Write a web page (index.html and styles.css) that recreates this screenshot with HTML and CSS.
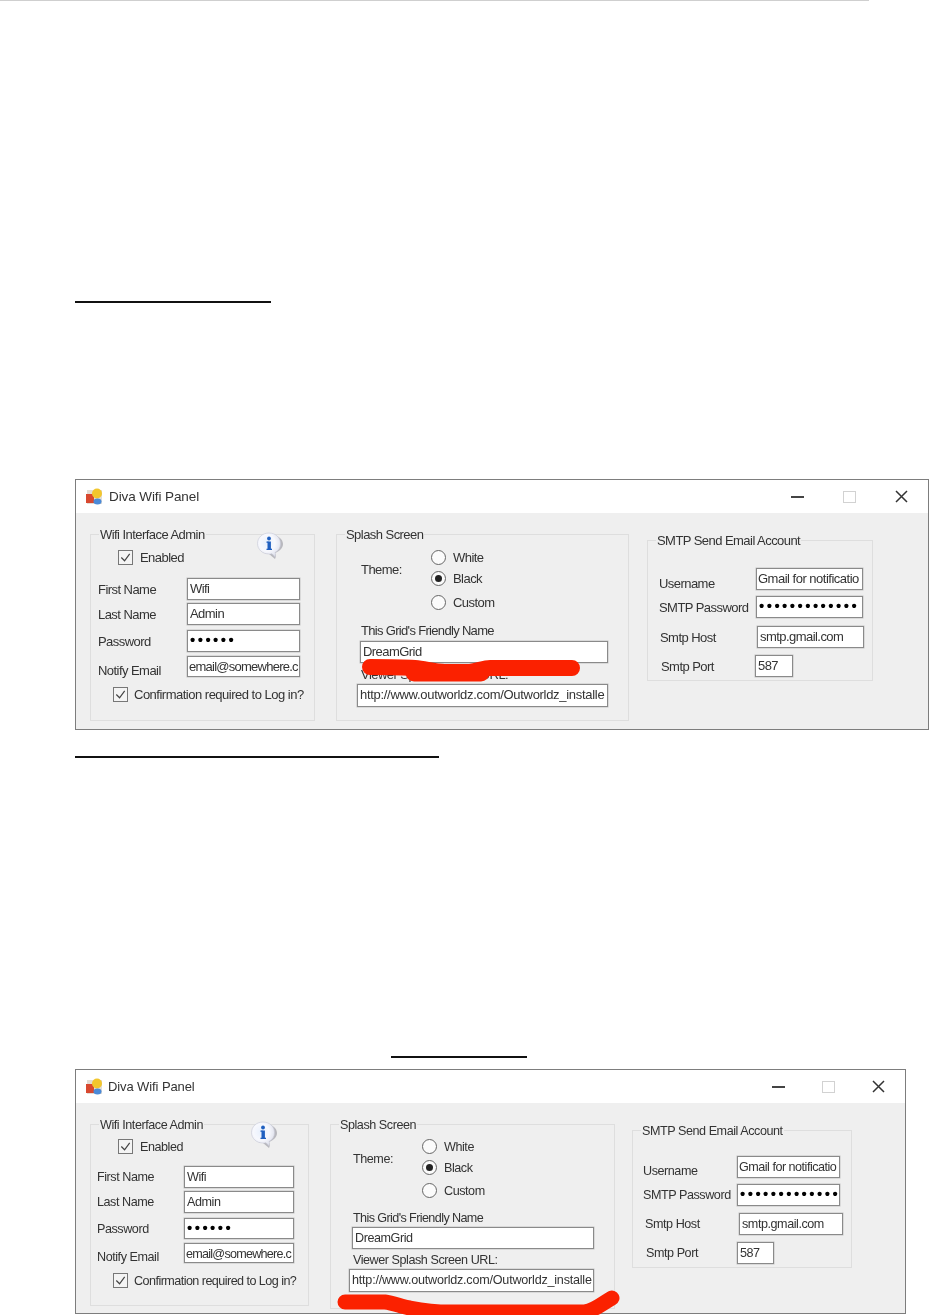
FILE: index.html
```html
<!DOCTYPE html>
<html lang="en">
<head>
<meta charset="utf-8">
<title>Diva Wifi Panel</title>
<link rel="stylesheet" href="styles.css">
</head>
<body>
<svg class="defs" width="0" height="0" aria-hidden="true">
  <defs>
    <radialGradient id="bubble" cx=".42" cy=".42" r=".62"><stop offset="0" stop-color="#e8f0fd"/><stop offset=".55" stop-color="#f7f8fd"/><stop offset="1" stop-color="#dfe1ec"/></radialGradient>
    <symbol id="app" viewBox="0 0 17 17">
      <rect x="1" y="2" width="15" height="14" fill="#e2ddd6"/>
      <rect x="0" y="6" width="8" height="9" fill="#d8482f"/>
      <circle cx="11" cy="5.500" r="5" fill="#f2c62e"/>
      <ellipse cx="11.500" cy="13.500" rx="4" ry="3" fill="#4a8ad8"/>
    </symbol>
    <symbol id="balloon" viewBox="0 0 28 28">
      <path d="M15 3C8 3 3 7 3 13c0 5 4 9 10 9l6 5c1-2 1-4 0-6 5-2 8-5 8-9C27 7 22 3 15 3Z" fill="#a5a5ad" opacity=".75"/>
      <path d="M13 1C6.500 1 1.500 5.500 1.500 11.500S6.500 22 13 22c1 0 2 0 3-.300l3 3c.5-1.500.5-3 0-4.200 3.500-1.500 5.500-5 5.500-9C24.500 5.500 19.500 1 13 1Z" fill="url(#bubble)" stroke="#c8cad6" stroke-width=".6"/>
      <rect x="11.500" y="9.500" width="3.400" height="8" fill="#1f5fc0"/>
      <rect x="10.500" y="9.500" width="2" height="1.300" fill="#1f5fc0"/>
      <rect x="10.500" y="16.700" width="5.500" height="1.300" fill="#1f5fc0"/>
      <circle cx="13" cy="6.500" r="1.900" fill="#1f5fc0"/>
    </symbol>
    <symbol id="tick" viewBox="0 0 14 14">
      <path d="M2.500 7 6 10.500 11.500 3" stroke="#444" stroke-width="1.300" fill="none"/>
    </symbol>
    <symbol id="close" viewBox="0 0 13 13">
      <path d="M1 1 12 12M12 1 1 12" stroke="#333" stroke-width="1.500" fill="none"/>
    </symbol>
  </defs>
</svg>
<main class="page">
  <div class="top-rule"></div>
  <div class="rule rule-1"></div>

  <section class="win win-a">
    <header class="titlebar">
      <svg class="app-icon"><use href="#app"/></svg>
      <span class="title">Diva Wifi Panel</span>
      <div class="controls">
        <span class="ctl ctl-min"></span>
        <span class="ctl ctl-max"></span>
        <svg class="ctl-close"><use href="#close"/></svg>
      </div>
    </header>
    <div class="body">
      <div class="group admin">
        <span class="legend">Wifi Interface Admin</span>
        <svg class="info"><use href="#balloon"/></svg>
        <label class="check r-enabled"><span class="box"><svg><use href="#tick"/></svg></span>Enabled</label>
        <div class="row r-first"><span class="lbl">First Name</span><span class="field">Wifi</span></div>
        <div class="row r-last"><span class="lbl">Last Name</span><span class="field">Admin</span></div>
        <div class="row r-pass"><span class="lbl">Password</span><span class="field dots">••••••</span></div>
        <div class="row r-notify"><span class="lbl low">Notify Email</span><span class="field tight">email@somewhere.c</span></div>
        <label class="check r-confirm"><span class="box"><svg><use href="#tick"/></svg></span>Confirmation required to Log in?</label>
      </div>

      <div class="group splash">
        <span class="legend">Splash Screen</span>
        <div class="theme">
          <span class="theme-lbl">Theme:</span>
          <div class="radios">
            <label class="radio r-white"><span class="dot"></span>White</label>
            <label class="radio r-black"><span class="dot on"></span>Black</label>
            <label class="radio r-custom"><span class="dot"></span>Custom</label>
          </div>
        </div>
        <span class="cap r-friendly">This Grid's Friendly Name</span>
        <span class="field f-friendly">DreamGrid</span>
        <span class="cap r-viewer">Viewer Splash Screen URL:</span>
        <span class="field f-url">http://www.outworldz.com/Outworldz_installe</span>
      </div>

      <div class="group smtp">
        <span class="legend">SMTP Send Email Account</span>
        <div class="row s-user"><span class="lbl low">Username</span><span class="field gmail">Gmail for notificatio</span></div>
        <div class="row s-pass"><span class="lbl">SMTP Password</span><span class="field dots">•••••••••••••</span></div>
        <div class="row s-host"><span class="lbl">Smtp Host</span><span class="field">smtp.gmail.com</span></div>
        <div class="row s-port"><span class="lbl">Smtp Port</span><span class="field">587</span></div>
      </div>
    </div>
    <svg class="scribble" viewBox="0 0 852 249"><path d="M294 187C310 187 325 187 339 188C350 189 358 192 369 192C380 192 388 192 394 192C402 191 408 188 414 188L496 188" fill="none" stroke="#fb2100" stroke-width="16" stroke-linecap="round" stroke-linejoin="round"/><path d="M338 193L405 193" fill="none" stroke="#fb2100" stroke-width="17" stroke-linecap="round"/></svg>
  </section>

  <div class="rule rule-2"></div>
  <div class="rule rule-3"></div>

  <section class="win win-b">
    <header class="titlebar">
      <svg class="app-icon"><use href="#app"/></svg>
      <span class="title">Diva Wifi Panel</span>
      <div class="controls">
        <span class="ctl ctl-min"></span>
        <span class="ctl ctl-max"></span>
        <svg class="ctl-close"><use href="#close"/></svg>
      </div>
    </header>
    <div class="body">
      <div class="group admin">
        <span class="legend">Wifi Interface Admin</span>
        <svg class="info"><use href="#balloon"/></svg>
        <label class="check r-enabled"><span class="box"><svg><use href="#tick"/></svg></span>Enabled</label>
        <div class="row r-first"><span class="lbl">First Name</span><span class="field">Wifi</span></div>
        <div class="row r-last"><span class="lbl">Last Name</span><span class="field">Admin</span></div>
        <div class="row r-pass"><span class="lbl">Password</span><span class="field dots">••••••</span></div>
        <div class="row r-notify"><span class="lbl low">Notify Email</span><span class="field tight">email@somewhere.c</span></div>
        <label class="check r-confirm"><span class="box"><svg><use href="#tick"/></svg></span>Confirmation required to Log in?</label>
      </div>

      <div class="group splash">
        <span class="legend">Splash Screen</span>
        <div class="theme">
          <span class="theme-lbl">Theme:</span>
          <div class="radios">
            <label class="radio r-white"><span class="dot"></span>White</label>
            <label class="radio r-black"><span class="dot on"></span>Black</label>
            <label class="radio r-custom"><span class="dot"></span>Custom</label>
          </div>
        </div>
        <span class="cap r-friendly">This Grid's Friendly Name</span>
        <span class="field f-friendly">DreamGrid</span>
        <span class="cap r-viewer">Viewer Splash Screen URL:</span>
        <span class="field f-url">http://www.outworldz.com/Outworldz_installe</span>
      </div>

      <div class="group smtp">
        <span class="legend">SMTP Send Email Account</span>
        <div class="row s-user"><span class="lbl low">Username</span><span class="field gmail">Gmail for notificatio</span></div>
        <div class="row s-pass"><span class="lbl">SMTP Password</span><span class="field dots">•••••••••••••</span></div>
        <div class="row s-host"><span class="lbl">Smtp Host</span><span class="field">smtp.gmail.com</span></div>
        <div class="row s-port"><span class="lbl">Smtp Port</span><span class="field">587</span></div>
      </div>
    </div>
    <svg class="scribble" viewBox="0 0 829 243"><path d="M269 232L309 232C318 233 326 237 334 238C350 241 362 242 374 242L509 242C520 240 528 232 536 228" fill="none" stroke="#fb2100" stroke-width="15" stroke-linecap="round" stroke-linejoin="round"/></svg>
  </section>
</main>
</body>
</html>
```

FILE: styles.css
```css
html, body { margin: 0; padding: 0; background: #fff; }
body { width: 929px; height: 1315px; overflow: hidden; }
.defs { display: block; height: 0; }
.page { display: flex; flex-direction: column; font-family: "Liberation Sans", Arial, sans-serif; color: #333; }

.top-rule { width: 869px; height: 1px; background: #cfcfcf; }
.rule { background: #111; height: 2px; }
.rule-1 { width: 196px; margin: 300px 0 0 75px; }
.rule-2 { width: 364px; margin: 26px 0 0 75px; }
.rule-3 { width: 136px; margin: 298px 0 0 391px; }

.win { position: relative; box-sizing: border-box; margin-left: 75px; background: #efefef; border: 1px solid #7d7d7d; filter: blur(0.45px); }
.win-a { width: 854px; height: 251px; margin-top: 176px; }
.win-b { width: 831px; height: 245px; margin-top: 11px; }

.titlebar { display: flex; align-items: center; height: 33px; background: #fff; padding-left: 10px; }
.app-icon { width: 17px; height: 17px; flex: none; }
.title { margin-left: 6px; font-size: 13.5px; letter-spacing: -0.1px; color: #333; }
.win-b .title { margin-left: 5px; font-size: 13px; }
.controls { margin-left: auto; display: flex; align-items: center; padding-right: 20px; }
.win-a .controls { gap: 39px; }
.win-b .controls { gap: 37px; }
.ctl { display: block; box-sizing: border-box; }
.ctl-min { width: 13px; height: 2px; background: #444; }
.ctl-max { width: 13px; height: 12px; border: 1px solid #d2d2d2; }
.ctl-close { width: 13px; height: 13px; }

.body { display: flex; align-items: flex-start; }
.win-a .body { padding: 21px 0 0 14px; }
.win-b .body { padding: 21px 0 0 14px; }

.group { position: relative; box-sizing: border-box; display: flex; flex-direction: column; align-items: flex-start; border: 1px solid #dedede; font-size: 13px; letter-spacing: -0.55px; }
.win-b .group { font-size: 12.6px; letter-spacing: -0.45px; }
.legend { position: absolute; top: -8px; left: 8px; padding: 0 1px; height: 16px; line-height: 16px; background: #efefef; white-space: nowrap; }

.win-a .admin { width: 225px; height: 187px; }
.win-a .splash { width: 293px; height: 187px; margin-left: 21px; }
.win-a .smtp { width: 226px; height: 141px; margin: 6px 0 0 18px; }
.win-b .admin { width: 219px; height: 182px; }
.win-b .splash { width: 285px; height: 185px; margin-left: 21px; }
.win-b .smtp { width: 220px; height: 138px; margin: 6px 0 0 17px; }

.info { position: absolute; width: 28px; height: 28px; }
.win-a .info { top: -3px; left: 165px; }
.win-b .info { top: -4px; left: 159px; }

.check { display: flex; align-items: center; gap: 7px; height: 15px; white-space: nowrap; }
.box { box-sizing: border-box; width: 15px; height: 15px; border: 1px solid #777; background: #f4f4f4; flex: none; display: block; }
.box svg { display: block; width: 13px; height: 13px; }
.r-confirm { gap: 6px; }
.win-a .r-confirm { letter-spacing: -0.5px; }
.win-b .r-confirm { letter-spacing: -0.55px; }

.row { display: flex; align-items: center; white-space: nowrap; }
.lbl { flex: none; display: block; box-sizing: border-box; }
.low { padding-top: 8px; }
.field { box-sizing: border-box; display: block; height: 100%; border: 1px solid #8a8a8a; box-shadow: 0 0 0 .5px #c4c4c4; background: #fff; padding: 0 2px; overflow: hidden; white-space: nowrap; line-height: 20px; color: #333; }
.tight { letter-spacing: -0.75px; padding: 0 1px; }
.gmail { letter-spacing: -0.5px; padding: 0 1px; }
.win-a .f-url { letter-spacing: -0.3px; }
.win-b .f-url { letter-spacing: -0.22px; }
.dots { color: #000; font-size: 15px; font-weight: 700; letter-spacing: 2.45px; line-height: 18px; padding: 0 1px 0 2px; }

/* Window A: admin */
.win-a .r-enabled { margin: 15px 0 0 27px; }
.win-a .admin .row { padding-left: 7px; }
.win-a .admin .lbl { width: 89px; }
.win-a .admin .field { width: 113px; }
.win-a .r-first { height: 22px; margin-top: 13px; }
.win-a .r-last { height: 22px; margin-top: 3px; }
.win-a .r-pass { height: 22px; margin-top: 5px; }
.win-a .r-notify { height: 21px; margin-top: 4px; }
.win-a .r-confirm { margin: 10px 0 0 22px; }

/* Window B: admin */
.win-b .r-enabled { margin: 14px 0 0 27px; }
.win-b .admin .row { padding-left: 6px; }
.win-b .admin .lbl { width: 87px; }
.win-b .admin .field { width: 110px; }
.win-b .r-first { height: 22px; margin-top: 12px; }
.win-b .r-last { height: 22px; margin-top: 3px; }
.win-b .r-pass { height: 21px; margin-top: 5px; }
.win-b .r-notify { height: 20px; margin-top: 4px; }
.win-b .r-confirm { margin: 10px 0 0 22px; }

/* Splash */
.theme { display: flex; }
.radios { display: flex; flex-direction: column; align-items: flex-start; }
.radio { display: flex; align-items: center; gap: 7px; height: 15px; }
.dot { position: relative; box-sizing: border-box; width: 15px; height: 15px; border: 1px solid #666; border-radius: 50%; background: #fbfbfb; display: block; flex: none; }
.dot.on::after { content: ""; position: absolute; left: 3px; top: 3px; width: 7px; height: 7px; border-radius: 50%; background: #222; }
.cap { display: block; height: 16px; line-height: 16px; white-space: nowrap; }
.f-friendly, .f-url { height: 22px; }

.win-a .theme { margin: 15px 0 0 24px; }
.win-a .theme-lbl { width: 70px; margin-top: 12px; }
.win-a .r-black { margin-top: 6px; }
.win-a .r-custom { margin-top: 9px; }
.win-a .r-friendly { margin: 13px 0 0 24px; letter-spacing: -0.68px; }
.win-a .f-friendly { width: 248px; margin: 2px 0 0 23px; }
.win-a .r-viewer { margin: 4px 0 0 24px; }
.win-a .f-url { width: 251px; height: 23px; margin: 1px 0 0 20px; }

.win-b .theme { margin: 14px 0 0 22px; }
.win-b .theme-lbl { width: 69px; margin-top: 13px; }
.win-b .r-black { margin-top: 6px; }
.win-b .r-custom { margin-top: 8px; }
.win-b .r-friendly { margin: 12px 0 0 22px; letter-spacing: -0.6px; }
.win-b .f-friendly { width: 242px; margin: 1px 0 0 21px; }
.win-b .r-viewer { margin: 3px 0 0 22px; }
.win-b .f-url { width: 245px; height: 23px; margin: 1px 0 0 18px; }

/* SMTP */
.win-a .smtp .row, .win-b .smtp .row { height: 22px; }
.win-a .smtp .field { width: 107px; }
.win-a .s-user { margin-top: 27px; padding-left: 11px; }
.win-a .s-user .lbl, .win-a .s-pass .lbl { width: 97px; }
.win-a .s-pass { margin-top: 6px; padding-left: 11px; }
.win-a .s-host { margin-top: 8px; padding-left: 12px; }
.win-a .s-host .lbl { width: 97px; }
.win-a .s-port { margin-top: 7px; padding-left: 13px; }
.win-a .s-port .lbl { width: 94px; }
.win-a .smtp .s-port .field { width: 38px; }

.win-b .smtp .field { width: 103px; }
.win-b .s-user { margin-top: 25px; padding-left: 10px; }
.win-b .s-user .lbl, .win-b .s-pass .lbl { width: 94px; }
.win-b .s-pass { margin-top: 6px; padding-left: 10px; }
.win-b .s-host { margin-top: 7px; padding-left: 12px; }
.win-b .s-host .lbl { width: 94px; }
.win-b .smtp .s-host .field { width: 104px; }
.win-b .s-port { margin-top: 7px; padding-left: 13px; }
.win-b .s-port .lbl { width: 91px; }
.win-b .smtp .s-port .field { width: 37px; }

.scribble { position: absolute; left: 0; top: 0; width: 100%; height: 100%; overflow: visible; pointer-events: none; }
```
